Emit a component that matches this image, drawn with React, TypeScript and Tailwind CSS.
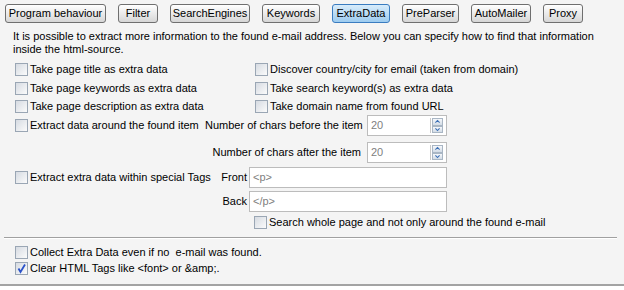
import React from "react";

const tabs = [
  { label: "Program behaviour", w: "w-[101px]" },
  { label: "Filter", w: "w-[40px]" },
  { label: "SearchEngines", w: "w-[80px]" },
  { label: "Keywords", w: "w-[58px]" },
  { label: "ExtraData", w: "w-[58px]", active: true },
  { label: "PreParser", w: "w-[57px]" },
  { label: "AutoMailer", w: "w-[60px]" },
  { label: "Proxy", w: "w-[40px]" },
];

const Check = ({ checked = false }: { checked?: boolean }) => (
  <span className="relative w-[13px] h-[13px] shrink-0 border border-[#9aa6b4] bg-gradient-to-br from-[#d6dbe2] to-[#fbfbfb]">
    {checked && (
      <svg viewBox="0 0 13 13" className="absolute -left-px -top-px w-[13px] h-[13px]">
        <path d="M3.5 6.5 L5.5 10 L10 2.5" fill="none" stroke="#2a52c9" strokeWidth="1.8" />
      </svg>
    )}
  </span>
);

const CheckRow = ({ label, checked }: { label: string; checked?: boolean }) => (
  <div className="flex items-center gap-[2px] h-[13px]">
    <Check checked={checked} />
    <span className="whitespace-pre">{label}</span>
  </div>
);

const Spin = () => (
  <div className="flex flex-col w-[13px] h-[15px] border-l border-[#c9c9c9] pl-px">
    {["M2 5 L5 2 L8 5", "M2 2 L5 5 L8 2"].map((d, i) => (
      <div
        key={i}
        className="flex-1 flex items-center justify-center border border-[#a9b6c4] bg-gradient-to-b from-[#f6f8fb] to-[#d3dce6]">
        <svg viewBox="0 0 10 7" className="w-[7px] h-[5px]">
          <path d={d} fill="none" stroke="#3b6fb5" strokeWidth="1.6" />
        </svg>
      </div>
    ))}
  </div>
);

const Field = ({ value, w, spin }: { value: string; w: string; spin?: boolean }) => (
  <div className={`${w} h-[21px] flex items-center justify-between border border-[#bcbcbc] bg-white pl-[3px] pr-[3px] text-[#808080]`}>
    <span>{value}</span>
    {spin && <Spin />}
  </div>
);

export default function App() {
  return (
    <div
      className="w-[624px] h-[290px] bg-white text-[11px] leading-[13px] text-black"
      style={{ fontFamily: '"Liberation Sans", Arial, sans-serif' }}>
      <div className="h-[286px] bg-[#f4f4f4] border-b-2 border-[#a3a3a3] flex flex-col">
        <div className="flex gap-[12px] pl-[5px] pt-[4px]">
          {tabs.map((t) => (
            <div
              key={t.label}
              className={`${t.w} h-[19px] flex items-center justify-center rounded-[3px] border whitespace-nowrap ${
                t.active
                  ? "border-[#3a7cc0] bg-gradient-to-b from-[#d8ecfb] to-[#9ccbef]"
                  : "border-[#6f6f6f] bg-gradient-to-b from-[#ffffff] to-[#d6d6d6]"
              }`}>
              {t.label}
            </div>
          ))}
        </div>

        <p className="pl-[13px] mt-[7px]">
          It is possible to extract more information to the found e-mail address. Below you can specify how to find that information
          <br />
          inside the html-source.
        </p>

        <div className="pl-[15px] mt-[7px] flex flex-col">
          <div className="flex">
            <div className="w-[240px]">
              <CheckRow label="Take page title as extra data" />
            </div>
            <CheckRow label="Discover country/city for email (taken from domain)" />
          </div>
          <div className="flex mt-[6px]">
            <div className="w-[240px]">
              <CheckRow label="Take page keywords as extra data" />
            </div>
            <CheckRow label="Take search keyword(s) as extra data" />
          </div>
          <div className="flex mt-[5px]">
            <div className="w-[240px]">
              <CheckRow label="Take page description as extra data" />
            </div>
            <CheckRow label="Take domain name from found URL" />
          </div>

          <div className="flex items-center h-[21px] mt-[2px]">
            <div className="w-[190px]">
              <CheckRow label="Extract data around the found item" />
            </div>
            <span className="w-[156px] text-right whitespace-nowrap">Number of chars before the item</span>
            <div className="ml-[6px]">
              <Field value="20" w="w-[80px]" spin />
            </div>
          </div>
          <div className="flex items-center h-[21px] mt-[6px]">
            <div className="w-[190px]" />
            <span className="w-[156px] text-right whitespace-nowrap">Number of chars after the item</span>
            <div className="ml-[6px]">
              <Field value="20" w="w-[80px]" spin />
            </div>
          </div>

          <div className="flex items-center h-[21px] mt-[4px]">
            <div className="w-[200px]">
              <CheckRow label="Extract extra data within special Tags" />
            </div>
            <span className="w-[32px] text-right">Front</span>
            <div className="ml-[2px]">
              <Field value={"<p>"} w="w-[198px]" />
            </div>
          </div>
          <div className="flex items-center h-[21px] mt-[3px]">
            <div className="w-[200px]" />
            <span className="w-[32px] text-right">Back</span>
            <div className="ml-[2px]">
              <Field value={"</p>"} w="w-[198px]" />
            </div>
          </div>
          <div className="ml-[239px] mt-[4px]">
            <CheckRow label="Search whole page and not only around the found e-mail" />
          </div>
        </div>

        <div className="mx-[4px] mt-[8px] h-[2px] border-t border-[#a0a0a0] border-b border-b-white w-[613px]" />

        <div className="pl-[15px] mt-[7px] flex flex-col gap-[3px]">
          <CheckRow label={"Collect Extra Data even if no  e-mail was found."} />
          <CheckRow label={"Clear HTML Tags like <font> or &amp;."} checked />
        </div>
      </div>
    </div>
  );
}
